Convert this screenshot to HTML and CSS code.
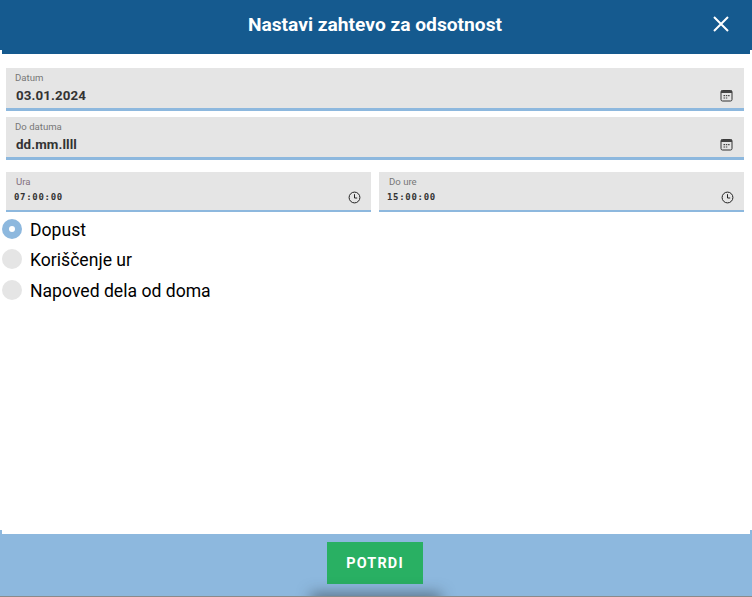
FILE: index.html
```html
<!DOCTYPE html>
<html lang="sl">
<head>
<meta charset="utf-8">
<title>Nastavi zahtevo za odsotnost</title>
<link rel="stylesheet" href="styles.css">
</head>
<body>
<div class="dialog">
  <header class="header">
    <div class="header-bar">
      <h1 class="title">Nastavi zahtevo za odsotnost</h1>
      <button class="close" aria-label="Zapri">
        <svg width="18" height="18" viewBox="0 0 18 18"><path d="M2 2L16 16M16 2L2 16" stroke="#fff" stroke-width="2" fill="none"/></svg>
      </button>
    </div>
    <div class="header-lip"></div>
  </header>
  <main class="content">
    <div class="field field-date">
      <span class="label">Datum</span>
      <div class="value-row">
        <span class="value">03.01.2024</span>
        <svg class="icon" width="13" height="13" viewBox="0 0 13 13"><use href="#cal"/></svg>
      </div>
    </div>
    <div class="field field-date">
      <span class="label">Do datuma</span>
      <div class="value-row">
        <span class="value">dd.mm.llll</span>
        <svg class="icon" width="13" height="13" viewBox="0 0 13 13"><use href="#cal"/></svg>
      </div>
    </div>
    <div class="time-row">
      <div class="field field-time">
        <span class="label label-ura">Ura</span>
        <div class="value-row">
          <span class="time">07:00:00</span>
          <svg class="icon" width="13" height="13" viewBox="0 0 13 13"><use href="#clock"/></svg>
        </div>
      </div>
      <div class="field field-time">
        <span class="label">Do ure</span>
        <div class="value-row">
          <span class="time">15:00:00</span>
          <svg class="icon" width="13" height="13" viewBox="0 0 13 13"><use href="#clock"/></svg>
        </div>
      </div>
    </div>
    <div class="radios">
      <div class="radio-row"><span class="radio radio-on"></span><span class="radio-text">Dopust</span></div>
      <div class="radio-row"><span class="radio"></span><span class="radio-text">Koriščenje ur</span></div>
      <div class="radio-row"><span class="radio"></span><span class="radio-text">Napoved dela od doma</span></div>
    </div>
  </main>
  <footer class="footer">
    <div class="footer-lip"><span class="corner"></span><span class="corner"></span></div>
    <div class="footer-bar">
      <button class="confirm">POTRDI</button>
    </div>
    <div class="footer-line"></div>
  </footer>
</div>
<svg class="defs" width="0" height="0">
  <symbol id="cal" viewBox="0 0 13 13">
    <rect x="1" y="1.5" width="11" height="10.5" rx="1.5" fill="none" stroke="#333" stroke-width="1"/>
    <rect x="1" y="1.5" width="11" height="2.5" fill="#444"/>
    <path d="M3.5 6h1.5v1.2H3.5zM5.8 6h1.5v1.2H5.8zM8.1 6h1.5v1.2H8.1zM3.5 8.4h1.5v1.2H3.5zM5.8 8.4h1.5v1.2H5.8z" fill="#444"/>
  </symbol>
  <symbol id="clock" viewBox="0 0 13 13">
    <circle cx="6.5" cy="6.5" r="5.4" fill="none" stroke="#222" stroke-width="1"/>
    <path d="M6.5 3.2V7H9.2" fill="none" stroke="#222" stroke-width="1"/>
  </symbol>
</svg>
</body>
</html>
```
FILE: styles.css
```css
* { box-sizing: border-box; }
html, body { margin: 0; padding: 0; }
body { background: #fff; font-family: Roboto, "Liberation Sans", sans-serif; overflow: hidden; }
.dialog { width: 752px; height: 597px; display: flex; flex-direction: column; }
.header { flex: none; }
.header-bar { height: 50px; background: #155a8f; display: flex; align-items: center; justify-content: center; padding-right: 2px; position: relative; }
.header-lip { height: 4px; margin: 0 2px; background: #155a8f; }
.title { margin: 0; font-size: 19.2px; font-weight: 700; color: #fff; line-height: 50px; }
.close { position: absolute; right: 22px; top: 15px; width: 18px; height: 18px; padding: 0; border: 0; background: none; display: block; }
.close svg { display: block; }
.content { flex: 1; min-height: 0; padding: 14px 8px 0 6px; }
.field { background: #e5e5e5; display: flex; flex-direction: column; }
.field-date { height: 43px; border-bottom: 3px solid #8db8de; padding: 4px 11px 0 10px; margin-bottom: 6px; }
.field-time { height: 40px; border-bottom: 2px solid #8db8de; padding: 4px 10px 0 8px; flex: 1; }
.label { font-size: 9.6px; line-height: 11px; color: #777; margin-left: -1px; }
.label-ura { color: #84707f; }
.field-time .label { margin-left: 2px; }
.value-row { display: flex; justify-content: space-between; align-items: center; }
.field-date .value-row { margin-top: 4px; height: 16px; }
.field-time .value-row { margin-top: 3px; height: 14px; }
.value { font-size: 13.33px; font-weight: 700; color: #333; letter-spacing: 0.1px; }
.time { font-family: "DejaVu Sans Mono", "Liberation Mono", monospace; font-size: 9px; font-weight: 700; color: #333; letter-spacing: 0.7px; }
.icon { display: block; flex: none; }
.time-row { display: flex; gap: 8px; margin-top: 12px; }
.radios { margin: 1.55px 0 0 -4px; }
.radio-row { height: 30.6px; display: flex; align-items: center; gap: 8px; font-size: 17.6px; line-height: 20.6px; color: #000; }
.radio-text { padding-top: 2px; }
.radio { width: 20px; height: 20px; border-radius: 50%; background: #e5e5e5; flex: none; }
.radio-on { background: #8db8de; position: relative; }
.radio-on::after { content: ""; position: absolute; left: 7px; top: 7px; width: 6px; height: 6px; border-radius: 50%; background: #fff; }
.footer { flex: none; position: relative; }
.footer-lip { height: 4px; display: flex; justify-content: space-between; }
.corner { width: 2px; background: #8db8de; }
.footer-bar { height: 62px; background: #8db8de; display: flex; justify-content: center; padding: 8px 2px 0 0; position: relative; overflow: hidden; }
.footer-bar::after { content: ""; position: absolute; left: 316px; right: 316px; bottom: -8px; height: 6px; box-shadow: 0 0 14px 5px rgba(50, 60, 70, 0.55); }
.confirm { width: 96px; height: 42px; border: 0; padding: 0; background: #29b063; color: #fff; font-family: Roboto, sans-serif; font-weight: 700; font-size: 14.4px; letter-spacing: 1.2px; }
.footer-line { height: 1px; background: #8a8a8a; }
.defs { position: absolute; }
```
